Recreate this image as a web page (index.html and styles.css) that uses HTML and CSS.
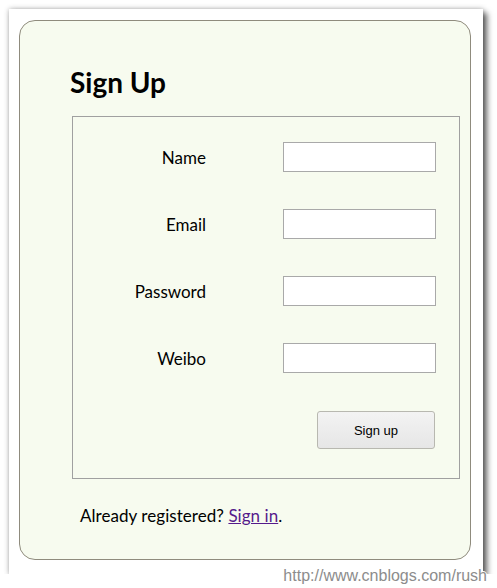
FILE: index.html
```html
<!DOCTYPE html>
<html>
<head>
    <title>Sign Up</title>
    <link rel="stylesheet" href="styles.css">
</head>
<body>
    <div class="window">
        <div class="panel">
            <h1>Sign Up</h1>
            <form class="fields" action="/signup" method="post">
                <div class="form-row">
                    <label for="name">Name</label>
                    <input type="text" id="name" name="name">
                </div>
                <div class="form-row">
                    <label for="email">Email</label>
                    <input type="email" id="email" name="email">
                </div>
                <div class="form-row">
                    <label for="password">Password</label>
                    <input type="password" id="password" name="password">
                </div>
                <div class="form-row">
                    <label for="weibo">Weibo</label>
                    <input type="text" id="weibo" name="weibo">
                </div>
                <div class="button-row">
                    <button type="submit">Sign up</button>
                </div>
            </form>
            <p class="signin">Already registered? <a href="#">Sign in</a>.</p>
        </div>
    </div>
    <div class="watermark">http://www.cnblogs.com/rush</div>
</body>
</html>
```

FILE: styles.css
```css
body {
    margin: 0;
    padding: 0;
    background-color: #fff;
    font-family: Lato, "Open Sans", sans-serif;
    color: #000;
}

.window {
    width: 474px;
    height: 565px;
    margin: 9px 0 0 9px;
    padding: 11px 0 0 10px;
    box-sizing: border-box;
    background-color: #fff;
    box-shadow: 0 0 5px rgba(0, 0, 0, 0.3), 4px 4px 6px rgba(0, 0, 0, 0.6);
}

.panel {
    width: 452px;
    height: 540px;
    box-sizing: border-box;
    padding: 0 0 0 50px;
    border: 1px solid #8f8b7d;
    border-radius: 16px;
    background-color: #f7fbef;
}

.panel h1 {
    margin: 44px 0 17px;
    font-size: 28px;
    line-height: 34px;
    font-weight: bold;
}

.fields {
    width: 388px;
    height: 363px;
    margin: 0 0 0 2px;
    padding: 25px 0 0;
    box-sizing: border-box;
    border: 1px solid #a0a0a0;
}

.form-row {
    display: flex;
    align-items: center;
    height: 30px;
    margin-bottom: 37px;
}

.form-row label {
    width: 133px;
    text-align: right;
    font-size: 17px;
}

.form-row input {
    width: 153px;
    height: 30px;
    margin: 0 0 0 77px;
    padding: 0 4px;
    box-sizing: border-box;
    border: 1px solid #a9a9a9;
    background-color: #fff;
}

.button-row {
    padding-left: 244px;
    margin-top: 38px;
}

.button-row button {
    width: 118px;
    height: 38px;
    padding: 0;
    border: 1px solid #b8b8b0;
    border-radius: 3px;
    background: linear-gradient(#f3f3f3, #e6e6e6);
    font-family: "Liberation Sans", Arial, sans-serif;
    font-size: 13px;
    color: #000;
    cursor: pointer;
}

.signin {
    margin: 27px 0 0 10px;
    font-size: 17px;
    line-height: 20px;
    letter-spacing: 0.05px;
}

.signin a {
    color: #551a8b;
}

.watermark {
    position: absolute;
    top: 567px;
    right: 10px;
    font-family: "Liberation Sans", Arial, sans-serif;
    font-size: 16px;
    color: #8c8c8c;
    text-shadow: 1px 0 0 #fff, -1px 0 0 #fff, 0 1px 0 #fff, 0 -1px 0 #fff;
}
```
